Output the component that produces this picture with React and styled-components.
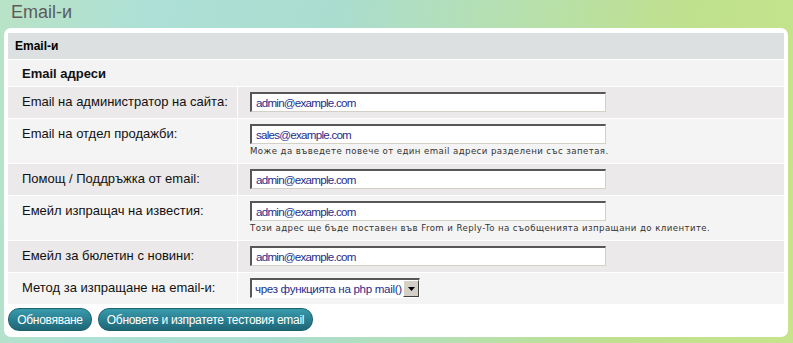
import React from "react";
import styled, { createGlobalStyle } from "styled-components";

const Global = createGlobalStyle`
  html, body { margin: 0; padding: 0; }
  body {
    width: 793px; height: 343px; overflow: hidden;
    font-family: "Liberation Sans", Arial, sans-serif;
    background: linear-gradient(100deg, #b9e3c6 0%, #ade0d6 18%, #abddcf 40%, #b6e0b0 60%, #bfe08e 80%, #c6e48c 100%);
  }
`;

const Page = styled.div`
  display: flex;
  flex-direction: column;
  width: 793px;
  height: 343px;
  box-sizing: border-box;
`;

const Title = styled.h1`
  margin: 0;
  padding: 0 0 0 11px;
  height: 28px;
  line-height: 24px;
  font-size: 18px;
  font-weight: normal;
  color: #5c5c5c;
`;

const Panel = styled.div`
  margin: 0 5px 0 4px;
  background: #fff;
  border-radius: 7px;
  padding: 5px 4px 6px 4px;
  display: flex;
  flex-direction: column;
  gap: 4px;
`;

const Table = styled.div`
  display: flex;
  flex-direction: column;
  gap: 1px;
  background: #fff;
`;

const Header = styled.div`
  height: 26px;
  background: #dce0e1;
  display: flex;
  align-items: center;
  padding-left: 7px;
  font-size: 12px;
  font-weight: bold;
  color: #000;
`;

const Section = styled.div`
  height: 26px;
  background: #f3f3f3;
  display: flex;
  align-items: center;
  padding-left: 14px;
  font-size: 13px;
  font-weight: bold;
  color: #111;
`;

const Row = styled.div`
  display: grid;
  grid-template-columns: 229px 1fr;
  gap: 1px;
  background: #fff;
`;

const Label = styled.div`
  background: ${(p) => (p.$alt ? "#f4f4f4" : "#ebe9e9")};
  padding: 7px 0 0 14px;
  font-size: 13px;
  line-height: 16px;
  color: #111;
`;

const Value = styled.div`
  background: ${(p) => (p.$alt ? "#f4f4f4" : "#ebe9e9")};
  padding: 5px 0 6px 12px;
  display: flex;
  flex-direction: column;
  align-items: flex-start;
`;

const Input = styled.input`
  box-sizing: border-box;
  width: 356px;
  height: 20px;
  margin: 0;
  padding: 0 4px;
  border-style: solid;
  border-width: 2px 1px 1px 2px;
  border-color: #575757 #d4d0c8 #d4d0c8 #575757;
  background: #fff;
  font-family: "Liberation Sans", Arial, sans-serif;
  font-size: 11.6px;
  letter-spacing: -0.75px;
  color: #1f2e8c;
  outline: none;
`;

const Help = styled.div`
  margin-top: 2px;
  font-family: "DejaVu Sans", Verdana, sans-serif;
  font-size: 8.6px;
  letter-spacing: 0.42px;
  line-height: 11px;
  color: #333;
`;

const Select = styled.div`
  box-sizing: border-box;
  width: 170px;
  height: 20px;
  display: flex;
  align-items: stretch;
  border-style: solid;
  border-width: 2px 1px 1px 2px;
  border-color: #575757 #fff #fff #575757;
  background: #fff;
`;

const SelectText = styled.div`
  flex: 1;
  padding-left: 3px;
  font-size: 11.6px;
  letter-spacing: -0.32px;
  line-height: 17px;
  color: #1f2e8c;
  white-space: nowrap;
  overflow: hidden;
`;

const Arrow = styled.div`
  width: 16px;
  box-sizing: border-box;
  background: #d4d0c8;
  border-style: solid;
  border-width: 1px;
  border-color: #fff #404040 #404040 #fff;
  display: flex;
  align-items: center;
  justify-content: center;
`;

const Buttons = styled.div`
  display: flex;
  gap: 6px;
`;

const Button = styled.button`
  box-sizing: border-box;
  height: 23px;
  width: ${(p) => p.$w}px;
  padding: 0;
  margin: 0;
  border: 1px solid #1c6171;
  border-radius: 11px;
  background: linear-gradient(#3a9bab, #2a8092 50%, #1e6675);
  color: #fff;
  font-family: "Liberation Sans", Arial, sans-serif;
  font-size: 12px;
  letter-spacing: -0.3px;
  white-space: nowrap;
  cursor: pointer;
`;

const rows = [
  { label: "Email на администратор на сайта:", value: "admin@example.com" },
  {
    label: "Email на отдел продажби:",
    value: "sales@example.com",
    help: "Може да въведете повече от един email адреси разделени със запетая.",
  },
  { label: "Помощ / Поддръжка от email:", value: "admin@example.com" },
  {
    label: "Емейл изпращач на известия:",
    value: "admin@example.com",
    help: "Този адрес ще бъде поставен във From и Reply-To на съобщенията изпращани до клиентите.",
  },
  { label: "Емейл за бюлетин с новини:", value: "admin@example.com" },
];

export default function App() {
  return (
    <>
      <Global />
      <Page>
        <Title>Email-и</Title>
        <Panel>
          <Table>
            <Header>Email-и</Header>
            <Section>Email адреси</Section>
            {rows.map((r, i) => (
              <Row key={i}>
                <Label $alt={i % 2 === 1}>{r.label}</Label>
                <Value $alt={i % 2 === 1}>
                  <Input defaultValue={r.value} />
                  {r.help && <Help>{r.help}</Help>}
                </Value>
              </Row>
            ))}
            <Row>
              <Label $alt>Метод за изпращане на email-и:</Label>
              <Value $alt>
                <Select>
                  <SelectText>чрез функцията на php mail()</SelectText>
                  <Arrow>
                    <svg width="7" height="4" viewBox="0 0 7 4">
                      <path d="M0 0h7L3.5 4z" fill="#000" />
                    </svg>
                  </Arrow>
                </Select>
              </Value>
            </Row>
          </Table>
          <Buttons>
            <Button $w={84}>Обновяване</Button>
            <Button $w={215}>Обновете и изпратете тестовия email</Button>
          </Buttons>
        </Panel>
      </Page>
    </>
  );
}
